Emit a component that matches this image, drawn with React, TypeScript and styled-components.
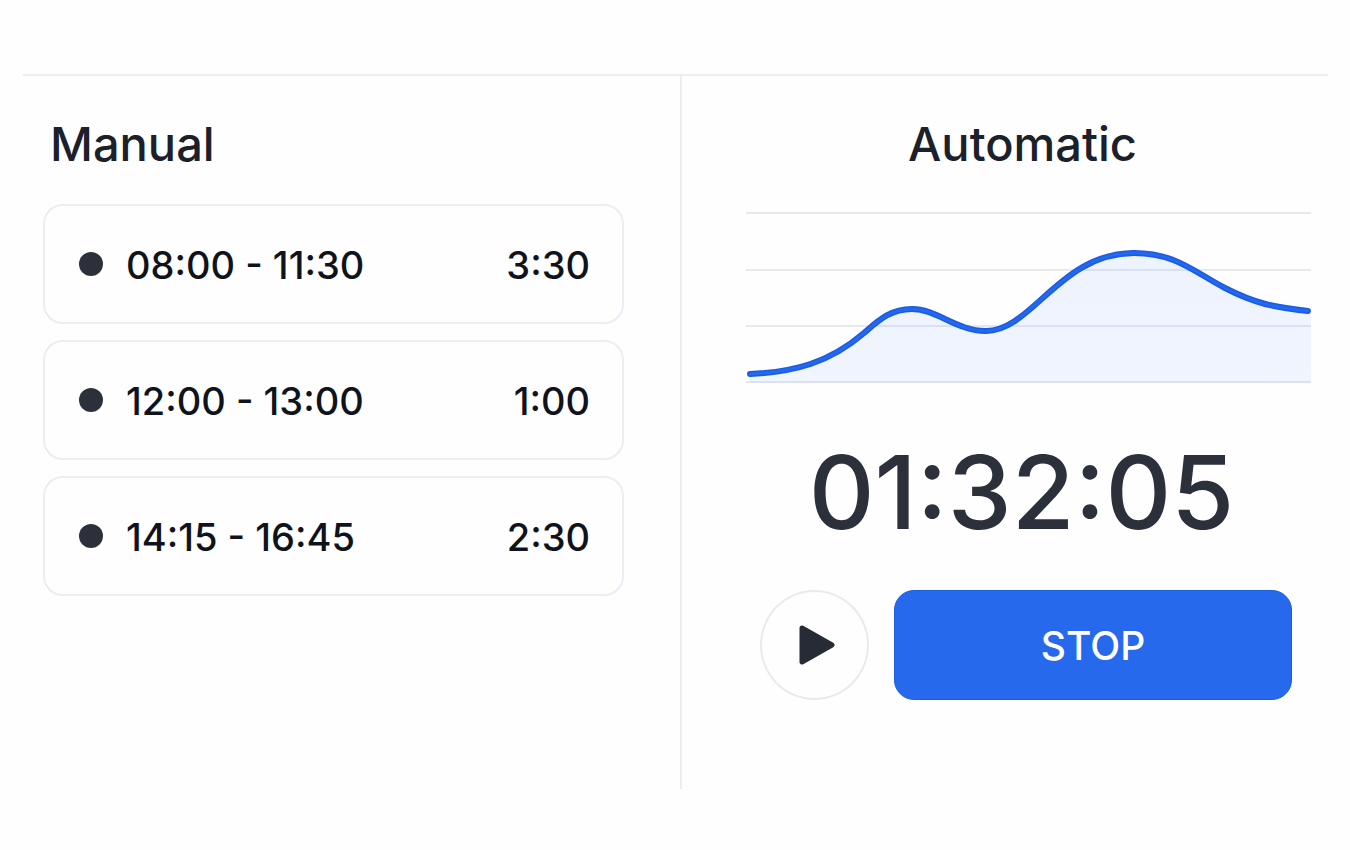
import React from "react";
import styled, { createGlobalStyle } from "styled-components";

const GlobalStyle = createGlobalStyle`
  *, *::before, *::after { box-sizing: border-box; }
  body {
    margin: 0;
    background: #fefefe;
    color: #0f131c;
    font-family: Inter, "Liberation Sans", sans-serif;
  }
`;

const Page = styled.main`
  padding: 74px 22px 60px 23px;
`;

const Panels = styled.div`
  display: grid;
  grid-template-columns: 101fr 99fr;
  min-height: calc(100vh - 135px);
  border-top: 2px solid #eceef5;
`;

const Panel = styled.section`
  min-width: 0;
  padding: 38px 17px 40px 64px;
`;

const ManualPanel = styled(Panel)`
  padding: 38px 56px 40px 20px;
  border-right: 2px solid #eceef5;
`;

const Title = styled.h2<{ $centered?: boolean }>`
  margin: 0;
  padding: ${(p) => (p.$centered ? "0 12px 0 0" : "0 7px")};
  font-size: 47px;
  line-height: 60px;
  font-weight: 500;
  color: #1b202b;
  text-align: ${(p) => (p.$centered ? "center" : "left")};
`;

const EntryList = styled.ul`
  list-style: none;
  margin: 30px 0 0;
  padding: 0;
  display: flex;
  flex-direction: column;
  gap: 16px;
`;

const Entry = styled.li`
  display: flex;
  align-items: center;
  height: 120px;
  padding: 0 32px 0 34px;
  border: 2px solid #ecedf3;
  border-radius: 20px;
  font-size: 38px;
  line-height: 48px;
  font-weight: 500;
  white-space: nowrap;
`;

const Dot = styled.span`
  width: 24px;
  height: 24px;
  margin-right: 23px;
  border-radius: 50%;
  background: #2b303b;
`;

const Range = styled.span`
  padding-top: 2px;
`;

const Duration = styled(Range)`
  margin-left: auto;
`;

const Chart = styled.svg`
  display: block;
  width: 100%;
  height: auto;
  margin-top: 38px;
`;

const Timer = styled.div`
  margin-top: 48px;
  padding-right: 14px;
  font-size: 102px;
  line-height: 120px;
  font-weight: 500;
  color: #2b303b;
  text-align: center;
  white-space: nowrap;
`;

const Controls = styled.div`
  display: flex;
  gap: 25px;
  margin-top: 38px;
  padding: 0 19px 0 14px;
`;

const PlayButton = styled.button`
  display: flex;
  align-items: center;
  justify-content: center;
  flex: none;
  width: 109px;
  height: 110px;
  padding: 0 0 0 4px;
  border: 2px solid #e9e9ef;
  border-radius: 50%;
  background: #fefefe;
  cursor: pointer;
`;

const StopButton = styled.button`
  flex: 1;
  height: 110px;
  padding: 2px 0 0;
  border: 1px solid #1c5fe3;
  border-radius: 20px;
  background: #2669ec;
  color: #fff;
  font-family: inherit;
  font-size: 39px;
  line-height: 48px;
  font-weight: 500;
  cursor: pointer;
`;

const entries = [
  { range: "08:00 - 11:30", duration: "3:30" },
  { range: "12:00 - 13:00", duration: "1:00" },
  { range: "14:15 - 16:45", duration: "2:30" },
];

const gridLines = [1, 58, 114, 170];

const curve =
  "M4 162 C48 160 83 151 118 121 C132 109 144 97 166 97 C191 97 210 119 240 119 C286 119 314 41 388 41 C430 41 448 60 479 76 C510 92 528 95 562 99";

export default function App() {
  return (
    <>
      <GlobalStyle />
      <Page>
        <Panels>
          <ManualPanel>
            <Title>Manual</Title>
            <EntryList>
              {entries.map((e) => (
                <Entry key={e.range}>
                  <Dot />
                  <Range>{e.range}</Range>
                  <Duration>{e.duration}</Duration>
                </Entry>
              ))}
            </EntryList>
          </ManualPanel>
          <Panel>
            <Title $centered>Automatic</Title>
            <Chart viewBox="0 0 565 172" role="img" aria-label="Activity over time">
              <defs>
                <linearGradient id="area" x1="0" y1="0" x2="0" y2="1">
                  <stop offset="0" stopColor="#3272f0" stopOpacity="0.08" />
                  <stop offset="1" stopColor="#2f7bff" stopOpacity="0.07" />
                </linearGradient>
              </defs>
              {gridLines.map((y) => (
                <path key={y} d={`M0 ${y}H565`} stroke="#e7e9f1" strokeWidth="2" />
              ))}
              <path d={`${curve} L565 99 V171 H4 Z`} fill="url(#area)" />
              <path d={curve} fill="none" stroke="#195be2" strokeWidth="6" strokeLinecap="round" />
              <path d={curve} fill="none" stroke="#2468f0" strokeWidth="3" strokeLinecap="round" />
            </Chart>
            <Timer>01:32:05</Timer>
            <Controls>
              <PlayButton type="button" aria-label="Start">
                <svg width="36" height="40" viewBox="0 0 36 40">
                  <path
                    d="M3 3 L33 20 L3 37 Z"
                    fill="#262b36"
                    stroke="#262b36"
                    strokeWidth="5"
                    strokeLinejoin="round"
                  />
                </svg>
              </PlayButton>
              <StopButton type="button">STOP</StopButton>
            </Controls>
          </Panel>
        </Panels>
      </Page>
    </>
  );
}
